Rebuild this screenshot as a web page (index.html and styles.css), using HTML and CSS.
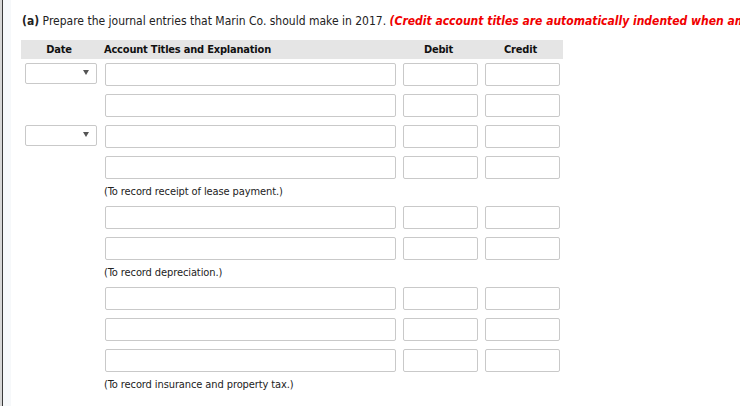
FILE: index.html
```html
<!DOCTYPE html>
<html lang="en">
<head>
<meta charset="utf-8">
<title>Journal entries</title>
<link rel="stylesheet" href="styles.css">
</head>
<body>
<div class="frame">
  <div class="gutter">
    <div class="content">
      <p class="prompt"><b>(a)</b> Prepare the journal entries that Marin Co. should make in 2017. <em class="note">(Credit account titles are automatically indented when amount is entered. Do not indent manually.)</em></p>
      <div class="journal">
        <div class="head head-date">Date</div>
        <div class="head head-account">Account Titles and Explanation</div>
        <div class="head head-num">Debit</div>
        <div class="head head-num">Credit</div>

        <div class="cell"><div class="select"></div></div>
        <div class="cell"><input class="field field-account" type="text"></div>
        <div class="cell"><input class="field field-num" type="text"></div>
        <div class="cell"><input class="field field-num" type="text"></div>

        <div class="cell"></div>
        <div class="cell"><input class="field field-account" type="text"></div>
        <div class="cell"><input class="field field-num" type="text"></div>
        <div class="cell"><input class="field field-num" type="text"></div>

        <div class="cell"><div class="select"></div></div>
        <div class="cell"><input class="field field-account" type="text"></div>
        <div class="cell"><input class="field field-num" type="text"></div>
        <div class="cell"><input class="field field-num" type="text"></div>

        <div class="cell"></div>
        <div class="cell"><input class="field field-account" type="text"></div>
        <div class="cell"><input class="field field-num" type="text"></div>
        <div class="cell"><input class="field field-num" type="text"></div>

        <div class="caption">(To record receipt of lease payment.)</div>

        <div class="cell"></div>
        <div class="cell"><input class="field field-account" type="text"></div>
        <div class="cell"><input class="field field-num" type="text"></div>
        <div class="cell"><input class="field field-num" type="text"></div>

        <div class="cell"></div>
        <div class="cell"><input class="field field-account" type="text"></div>
        <div class="cell"><input class="field field-num" type="text"></div>
        <div class="cell"><input class="field field-num" type="text"></div>

        <div class="caption">(To record depreciation.)</div>

        <div class="cell"></div>
        <div class="cell"><input class="field field-account" type="text"></div>
        <div class="cell"><input class="field field-num" type="text"></div>
        <div class="cell"><input class="field field-num" type="text"></div>

        <div class="cell"></div>
        <div class="cell"><input class="field field-account" type="text"></div>
        <div class="cell"><input class="field field-num" type="text"></div>
        <div class="cell"><input class="field field-num" type="text"></div>

        <div class="cell"></div>
        <div class="cell"><input class="field field-account" type="text"></div>
        <div class="cell"><input class="field field-num" type="text"></div>
        <div class="cell"><input class="field field-num" type="text"></div>

        <div class="caption">(To record insurance and property tax.)</div>
      </div>
    </div>
  </div>
</div>
</body>
</html>
```

FILE: styles.css
```css
html, body {
  margin: 0;
  padding: 0;
  background: #fff;
}

body {
  font-family: "DejaVu Sans Condensed", "DejaVu Sans", sans-serif;
  color: #222;
  overflow: hidden;
}

.frame {
  min-height: 100vh;
  border-left: 2px solid #d6d6d6;
  box-sizing: border-box;
}

.gutter {
  min-height: 100vh;
  border-left: 1px solid #3a3a3a;
  background: #f6f8fa;
  padding-left: 8px;
  box-sizing: border-box;
}

.content {
  min-height: 100vh;
  background: #fff;
  padding: 13px 0 0 10px;
  box-sizing: border-box;
}

.prompt {
  margin: 0 0 11px 1px;
  font-size: 12px;
  line-height: 16px;
  white-space: nowrap;
  overflow: hidden;
}

.prompt b {
  font-weight: bold;
}

.note {
  color: #f00000;
  font-weight: bold;
  font-style: italic;
}

.journal {
  display: grid;
  grid-template-columns: 80px 298px 82px 82px;
  width: 542px;
  font-size: 11px;
}

.head {
  background: #e5e5e5;
  height: 19px;
  line-height: 19px;
  font-weight: bold;
  color: #111;
  letter-spacing: -0.2px;
}

.head-date {
  text-align: center;
  padding-right: 4px;
}

.head-account {
  padding-left: 3px;
}

.head-num {
  text-align: center;
  padding-right: 3px;
}

.cell {
  height: 31px;
  padding: 4px 0 0 4px;
  box-sizing: border-box;
}

.field {
  display: block;
  box-sizing: border-box;
  height: 23px;
  margin: 0;
  padding: 0 4px;
  border: 1px solid #c9c9c9;
  border-radius: 2px;
  background: #fff;
  font: inherit;
}

.field-account {
  width: 291px;
}

.field-num {
  width: 75px;
}

.select {
  position: relative;
  box-sizing: border-box;
  width: 72px;
  height: 21px;
  border: 1px solid #c9c9c9;
  border-radius: 2px;
  background: #fff;
}

.select::after {
  content: "";
  position: absolute;
  right: 7px;
  top: 6px;
  border-left: 3px solid transparent;
  border-right: 3px solid transparent;
  border-top: 5px solid #555;
}

.caption {
  grid-column: 2 / 5;
  height: 19px;
  line-height: 17px;
  padding-left: 3px;
  box-sizing: border-box;
  color: #222;
  letter-spacing: -0.1px;
}
```
